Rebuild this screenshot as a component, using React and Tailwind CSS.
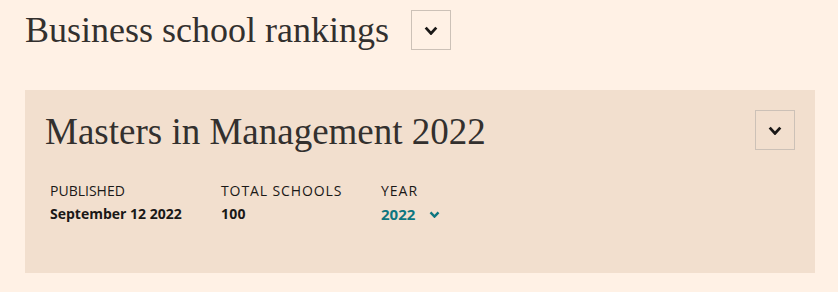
const serif = { fontFamily: '"Liberation Serif", "DejaVu Serif", serif' };

function Chevron({ w = 13, h = 8, stroke = 2.6, className = "" }) {
  return (
    <svg width={w} height={h} viewBox={`0 0 ${w} ${h}`} className={className} fill="none">
      <polyline
        points={`${stroke / 2 + 0.3},${stroke / 2 + 0.2} ${w / 2},${h - stroke / 2 - 0.2} ${w - stroke / 2 - 0.3},${stroke / 2 + 0.2}`}
        stroke="currentColor"
        strokeWidth={stroke}
        strokeLinecap="butt"
        strokeLinejoin="miter"
      />
    </svg>
  );
}

function Stat({ label, labelClass = "", children }) {
  return (
    <div className="flex flex-col">
      <span className={`text-[14px] leading-[18px] uppercase text-[#1a1817] ${labelClass}`}>{label}</span>
      <span className="mt-[5px] text-[14px] leading-[18px] font-bold text-[#1a1817]">{children}</span>
    </div>
  );
}

function BoxButton() {
  return (
    <button className="w-[40px] h-[40px] shrink-0 border border-[#ccc1b7] flex items-center justify-center text-[#1a1817]">
      <Chevron w={14} h={9} stroke={2.8} />
    </button>
  );
}

export default function App() {
  return (
    <div
      className="min-h-screen w-[838px] h-[292px] bg-[#fff1e5] text-[#33302e] pl-[25px] pr-[23px] pt-[10px]"
      style={{ fontFamily: '"Open Sans", "Noto Sans", sans-serif' }}
    >
      <div className="flex items-center gap-[22px]">
        <h1 className="text-[36px] leading-[40px]" style={serif}>
          Business school rankings
        </h1>
        <BoxButton />
      </div>

      <div className="mt-[40px] bg-[#f2dfce] h-[183px] pl-[20px] pr-[20px] pt-[20px]">
        <div className="flex items-start justify-between">
          <h2 className="text-[37px] leading-[40px] mt-[2px]" style={serif}>
            Masters in Management 2022
          </h2>
          <BoxButton />
        </div>
        <div className="flex pl-[5px] mt-[30px]">
          <div className="w-[171px]">
            <Stat label="Published">September 12 2022</Stat>
          </div>
          <div className="w-[160px]">
            <Stat label="Total schools" labelClass="tracking-[0.9px]">
              <span className="tracking-[0.3px]">100</span>
            </Stat>
          </div>
          <div className="flex flex-col">
            <span className="text-[14px] leading-[18px] uppercase text-[#1a1817] tracking-[1px]">Year</span>
            <span className="mt-[5px] text-[15px] leading-[18px] font-bold text-[#0d7680] flex items-center gap-[14px]">
              2022
              <Chevron w={11} h={7} stroke={2.4} />
            </span>
          </div>
        </div>
      </div>
    </div>
  );
}
